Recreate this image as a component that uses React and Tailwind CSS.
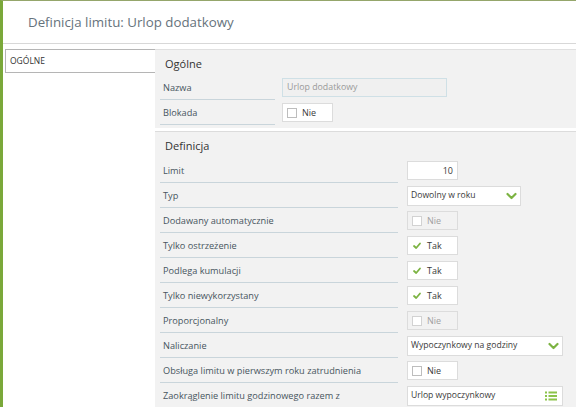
import React from "react";

const font = { fontFamily: '"Open Sans", "Noto Sans", sans-serif' };

function Chevron() {
  return (
    <svg width="11" height="8" viewBox="0 0 11 8" className="shrink-0">
      <polyline points="1.5,2 5.5,6 9.5,2" fill="none" stroke="#7cb342" strokeWidth="2.2" strokeLinecap="round" strokeLinejoin="round" />
    </svg>
  );
}

function ListIcon() {
  return (
    <svg width="12" height="10" viewBox="0 0 12 10" className="shrink-0">
      <g fill="#8bc34a">
        <rect x="0" y="0.5" width="2" height="2" />
        <rect x="3.5" y="0.5" width="8.5" height="2" />
        <rect x="0" y="4" width="2" height="2" />
        <rect x="3.5" y="4" width="8.5" height="2" />
        <rect x="0" y="7.5" width="2" height="2" />
        <rect x="3.5" y="7.5" width="8.5" height="2" />
      </g>
    </svg>
  );
}

function Check({ on, disabled }) {
  return (
    <div
      className={
        "w-[51px] h-[19px] border flex items-center pl-[4px] gap-[5px] text-[9px] " +
        (disabled ? "border-[#dcdcdc] bg-[#f2f2f2] text-[#a0a0a0]" : "border-[#dcdcdc] bg-white text-[#3a3a3a]")
      }
    >
      {on ? (
        <svg width="10" height="9" viewBox="0 0 10 9" className="shrink-0">
          <polyline points="2,5 4.2,7 8,2.5" fill="none" stroke="#7cb342" strokeWidth="1.8" strokeLinecap="round" strokeLinejoin="round" />
        </svg>
      ) : (
        <span className={"w-[10px] h-[10px] border shrink-0 bg-white " + (disabled ? "border-[#d2d2d2]" : "border-[#bdbdbd]")} />
      )}
      <span>{on ? "Tak" : "Nie"}</span>
    </div>
  );
}

function Row({ label, labelW, gap, children }) {
  return (
    <div className="flex items-center h-[25px]">
      <div
        className="h-full flex items-center pl-[3px] pt-[2px] border-b border-[#c9d5db] text-[9.2px] text-[#47555e] shrink-0"
        style={{ width: labelW }}
      >
        {label}
      </div>
      <div className="shrink-0" style={{ marginLeft: gap }}>
        {children}
      </div>
    </div>
  );
}

export default function App() {
  const W2 = 238;
  const G2 = 9;
  return (
    <div className="w-[576px] h-[407px] overflow-hidden bg-white border-l-[3px] border-l-[#7aa83a] border-t border-t-[#95a66b]" style={font}>
      <div className="h-[43px] flex items-center pl-[25px] pt-[1px] border-b border-[#d8d8d8]">
        <span className="text-[13.3px] text-[#66737c]">Definicja limitu: Urlop dodatkowy</span>
      </div>
      <div className="flex pt-[5px]">
        <div className="pl-[2px] shrink-0">
          <div className="w-[150px] h-[24px] border border-r-0 border-[#b5b5b5] flex items-center pl-[4px] text-[8.5px] text-[#333]">
            OGÓLNE
          </div>
        </div>
        <div className="flex-1 flex flex-col">
          <div className="bg-[#f2f2f2] border-t border-[#e0e0e0] pl-[5px] pb-[3px]">
            <div className="h-[25px] pt-[6px] pl-[5px] text-[11px] text-[#333]">Ogólne</div>
            <Row label="Nazwa" labelW={115} gap={7}>
              <div className="w-[165px] h-[19px] border border-[#cfe0e6] bg-[#f0f0f0] flex items-center pl-[4px] text-[8.8px] text-[#9a9a9a]">
                Urlop dodatkowy
              </div>
            </Row>
            <Row label="Blokada" labelW={115} gap={7}>
              <Check on={false} />
            </Row>
          </div>
          <div className="h-[3px] bg-white" />
          <div className="bg-[#f2f2f2] border-t border-[#dcdcdc] pl-[5px] flex-1 h-[300px]">
            <div className="h-[26px] pt-[6px] pl-[5px] text-[11px] text-[#333]">Definicja</div>
            <Row label="Limit" labelW={W2} gap={G2}>
              <div className="w-[51px] h-[19px] border border-[#dcdcdc] bg-white flex items-center justify-end pr-[4px] text-[9px] text-[#3a3a3a]">10</div>
            </Row>
            <Row label="Typ" labelW={W2} gap={G2}>
              <div className="w-[114px] h-[20px] border border-[#dcdcdc] bg-white flex items-center justify-between pl-[3px] pr-[3px] text-[8.6px] text-[#3a3a3a]">
                <span>Dowolny w roku</span>
                <Chevron />
              </div>
            </Row>
            <Row label="Dodawany automatycznie" labelW={W2} gap={G2}>
              <Check on={false} disabled />
            </Row>
            <Row label="Tylko ostrzeżenie" labelW={W2} gap={G2}>
              <Check on />
            </Row>
            <Row label="Podlega kumulacji" labelW={W2} gap={G2}>
              <Check on />
            </Row>
            <Row label="Tylko niewykorzystany" labelW={W2} gap={G2}>
              <Check on />
            </Row>
            <Row label="Proporcjonalny" labelW={W2} gap={G2}>
              <Check on={false} disabled />
            </Row>
            <Row label="Naliczanie" labelW={W2} gap={G2}>
              <div className="w-[156px] h-[20px] border border-[#dcdcdc] bg-white flex items-center justify-between pl-[3px] pr-[3px] text-[8.6px] text-[#3a3a3a]">
                <span>Wypoczynkowy na godziny</span>
                <Chevron />
              </div>
            </Row>
            <Row label="Obsługa limitu w pierwszym roku zatrudnienia" labelW={W2} gap={G2}>
              <Check on={false} />
            </Row>
            <Row label="Zaokrąglenie limitu godzinowego razem z" labelW={W2} gap={G2}>
              <div className="w-[156px] h-[20px] border border-[#dcdcdc] bg-white flex items-center justify-between pl-[3px] pr-[5px] text-[8.6px] text-[#3a3a3a]">
                <span>Urlop wypoczynkowy</span>
                <ListIcon />
              </div>
            </Row>
          </div>
        </div>
      </div>
    </div>
  );
}
